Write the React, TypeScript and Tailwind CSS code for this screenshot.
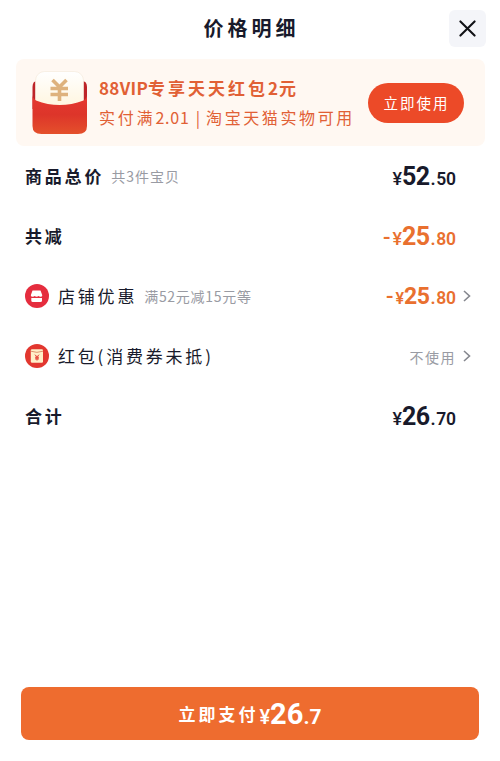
import type { ReactNode } from 'react';

interface PriceProps {
  integer: string;
  decimal: string;
  negative?: boolean;
  small?: boolean;
  className?: string;
}

function Price({ integer, decimal, negative, small, className = 'text-[#181a2b]' }: PriceProps) {
  return (
    <span className={`flex items-baseline pt-[3px] font-['Roboto','Noto_Sans_CJK_SC',sans-serif] font-bold leading-[30px] ${className}`}>
      {negative && <span className="mr-[2px] text-[22px] font-medium">-</span>}
      <span className={small ? 'text-[16px] font-semibold' : 'text-[18px] font-medium'}>¥</span>
      <span className={small ? 'text-[23px] tracking-[-0.4px]' : 'text-[25px] tracking-[-0.6px]'}>{integer}</span>
      <span className="ml-px mr-[0.500px] text-[18px] font-semibold">.</span>
      <span className="text-[17.500px] font-semibold tracking-[-0.1px]">{decimal}</span>
    </span>
  );
}

function RedPacket() {
  return (
    <svg width="56" height="64" viewBox="0 0 56 64" className="shrink-0">
      <defs>
        <linearGradient id="front" x1="0" y1="0" x2="0" y2="1">
          <stop offset="0" stopColor="#e63831" />
          <stop offset="0.5" stopColor="#dd352a" />
          <stop offset="1" stopColor="#e4502b" />
        </linearGradient>
        <linearGradient id="card" x1="0" y1="0" x2="0" y2="1">
          <stop offset="0" stopColor="#ffffff" />
          <stop offset="1" stopColor="#fff4d9" />
        </linearGradient>
      </defs>
      <path d="M0.5 16Q0.5 10 5 10H50Q55 10 55 16V38H0.5Z" fill="#bd2429" />
      <rect x="3.5" y="0.5" width="48" height="42" rx="9" fill="url(#card)" stroke="#f5ebdd" strokeWidth="0.7" />
      <path d="M20.500 9L27.500 16L34.500 9M18.500 17.500H36M18.500 23.500H36M27.500 16V30" fill="none" stroke="#deb27d" strokeWidth="3.6" />
      <path d="M0.5 24Q0.5 27 4 29.500Q27.5 38.500 51.5 29.500Q55 27 55 24V55Q55 63 46 63H9.5Q0.5 63 0.5 55Z" fill="url(#front)" />
    </svg>
  );
}

function ShopIcon() {
  return (
    <svg width="24" height="24" viewBox="0 0 24 24">
      <circle cx="12" cy="12" r="12" fill="#e52d3e" />
      <path d="M7.5 6.500H15.500L17.300 11.200Q17.300 12.800 15.500 12.800Q14.300 12.800 13.500 12Q12.700 12.800 11.700 12.800Q10.500 12.800 9.700 12Q9 12.800 7.800 12.800Q5.800 12.800 5.800 11.200Z" fill="#fff" />
      <path d="M6.300 14H17V16.500Q17 18 15.500 18H7.800Q6.300 18 6.300 16.500Z" fill="#fff" />
    </svg>
  );
}

function PacketIcon() {
  return (
    <svg width="24" height="24" viewBox="0 0 24 24">
      <circle cx="12" cy="12" r="12" fill="#e2372f" />
      <rect x="5.800" y="5.200" width="12.200" height="13.600" rx="1.200" fill="#fff0c9" />
      <path d="M5.800 7.200Q12 9.500 18 7.200" fill="none" stroke="#d98a64" strokeWidth="0.9" />
      <path d="M10 10.700L12 12.800L14 10.700M10 13.200H14M10 14.900H14M12 12.800V16.500" fill="none" stroke="#e2372f" strokeWidth="1" />
    </svg>
  );
}

function Arrow() {
  return (
    <svg width="8" height="12" viewBox="0 0 8 12" fill="none" stroke="#85878e" strokeWidth="1.600">
      <path d="M1 1L6.500 6L1 11" />
    </svg>
  );
}

interface RowProps {
  label: string;
  note?: ReactNode;
  icon?: ReactNode;
  arrow?: boolean;
  children: ReactNode;
}

function Row({ label, note, icon, arrow, children }: RowProps) {
  return (
    <div className="flex h-[60px] items-center pr-[22px] pl-[25px] text-[#181a2b]">
      {icon && <span className="mr-[9px] shrink-0">{icon}</span>}
      <span className={`whitespace-nowrap text-[17px] tracking-[2.8px] ${icon ? '' : 'font-bold'}`}>{label}</span>
      {note && <span className="ml-[7px] whitespace-nowrap text-[14px] text-[#999ba3]">{note}</span>}
      <span className="ml-auto">{children}</span>
      <span className="flex w-[22px] justify-center">{arrow && <Arrow />}</span>
    </div>
  );
}

export default function App() {
  return (
    <div className="flex h-[761px] w-[500px] flex-col overflow-hidden bg-white font-['Noto_Sans_CJK_SC',sans-serif]">
      <header className="grid h-[59px] shrink-0 grid-cols-[1fr_auto_1fr] items-center pr-[14px] pb-[3px]">
        <h1 className="col-start-2 pl-[17px] text-[20px] font-bold leading-none tracking-[4px] text-[#181a2b]">价格明细</h1>
        <button className="flex h-[37px] w-[37px] items-center justify-center justify-self-end rounded-[6px] bg-[#f4f5f9]">
          <svg width="17" height="17" viewBox="0 0 18 18" fill="none" stroke="#111216" strokeWidth="2.200" strokeLinecap="round">
            <path d="M1.500 1.500L16.500 16.500M16.500 1.500L1.500 16.500" />
          </svg>
        </button>
      </header>

      <section className="mr-[15px] ml-4 flex h-[87px] shrink-0 items-center rounded-[8px] bg-[#fff8f2] pr-[21px] pl-4">
        <RedPacket />
        <div className="ml-[11px] flex flex-col gap-[5px] whitespace-nowrap text-[#e16035]">
          <p className="text-[17px] font-bold leading-6">
            <span className="tracking-[0.3px]">88VIP</span>
            <span className="tracking-[3px]">专享天天红包</span>
            <span className="mr-px">2</span>元
          </p>
          <p className="text-[16px] leading-6">
            <span className="tracking-[2.8px]">实付满</span>
            <span className="tracking-[0.8px]">2.01</span>
            <span className="mx-[6px]">|</span>
            <span className="tracking-[2.6px]">淘宝天猫实物可用</span>
          </p>
        </div>
        <button className="ml-auto flex h-10 w-24 shrink-0 items-center justify-center rounded-full bg-[#ec4a28] pl-px text-[14.500px] tracking-[2px] text-white">立即使用</button>
      </section>

      <main>
        <Row label="商品总价" note={<span className="tracking-[1px]">共3件宝贝</span>}>
          <Price integer="52" decimal="50" />
        </Row>
        <Row label="共减">
          <Price integer="25" decimal="80" negative className="text-[#e9702f]" />
        </Row>
        <Row label="店铺优惠" icon={<ShopIcon />} note={<span className="tracking-[0.7px]">满52元减15元等</span>} arrow>
          <Price integer="25" decimal="80" negative small className="text-[#e9702f]" />
        </Row>
        <Row label="红包(消费券未抵)" icon={<PacketIcon />} arrow>
          <span className="text-[14px] tracking-[1.500px] text-[#999ba3]">不使用</span>
        </Row>
        <Row label="合计">
          <Price integer="26" decimal="70" />
        </Row>
      </main>

      <footer className="mt-auto pr-[21px] pb-[21px] pl-[21px]">
        <button className="flex h-[53px] w-full items-center justify-center rounded-[8px] bg-[#ee6c2f] text-white">
          <span className="mr-px text-[17px] font-bold tracking-[3px]">立即支付</span>
          <span className="flex items-baseline pt-[3px] font-['Roboto',sans-serif] font-bold leading-8">
            <span className="text-[20px] font-medium">¥</span>
            <span className="text-[29px]">26</span>
            <span className="text-[21px]">.7</span>
          </span>
        </button>
      </footer>
    </div>
  );
}
